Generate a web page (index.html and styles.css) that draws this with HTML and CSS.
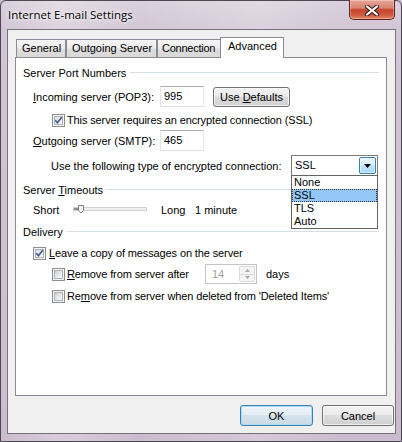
FILE: index.html
```html
<!DOCTYPE html>
<html>
<head>
<meta charset="utf-8">
<title>Internet E-mail Settings</title>
<link rel="stylesheet" href="styles.css">
</head>
<body>
<div class="window">
  <div class="titlebar">
    <span class="title">Internet E-mail Settings</span>
    <div class="close">
      <svg width="14" height="11" viewBox="0 0 14 11">
        <path d="M2 1.5 L12 9.5 M12 1.5 L2 9.5" stroke="#3b2522" stroke-width="4.2" stroke-linecap="round" fill="none"/>
        <path d="M2 1.5 L12 9.5 M12 1.5 L2 9.5" stroke="#ffffff" stroke-width="2.2" stroke-linecap="round" fill="none"/>
      </svg>
    </div>
  </div>
  <div class="client">
    <div class="tabs">
      <div class="tab t-gen">General</div>
      <div class="tab t-out">Outgoing Server</div>
      <div class="tab t-con">Connection</div>
      <div class="tab t-adv active">Advanced</div>
    </div>
    <div class="panel">
      <div class="gh"><span>Server Port Numbers</span></div>

      <div class="row r-in ind1">
        <span class="lbl w-port"><u>I</u>ncoming server (POP3):</span>
        <span class="tb">995</span>
        <button class="btn b-def"><span>Use <u>D</u>efaults</span></button>
      </div>

      <div class="row r-ssl ind2">
        <span class="cb on"><i><svg width="9" height="9" viewBox="0 0 9 9"><path d="M1.2 4.2 L3.4 6.6 L7.8 1.2" stroke="#4a5f97" stroke-width="1.7" fill="none"/></svg></i></span>
        <span class="ct">This server requires an encrypted connection (SSL)</span>
      </div>

      <div class="row r-out ind1">
        <span class="lbl w-port"><u>O</u>utgoing server (SMTP):</span>
        <span class="tb">465</span>
      </div>

      <div class="row r-enc ind-enc">
        <span class="lbl w-enc">Use the following type of encr<u>y</u>pted connection:</span>
        <div class="combo">
          <span class="cv">SSL</span>
          <span class="cbtn"><svg width="7" height="4" viewBox="0 0 7 4"><path d="M0 0 H7 L3.5 4 Z" fill="#000"/></svg></span>
          <div class="list">
            <div class="opt">None</div>
            <div class="opt sel">SSL</div>
            <div class="opt">TLS</div>
            <div class="opt">Auto</div>
          </div>
        </div>
      </div>

      <div class="gh g2"><span>Server <u>T</u>imeouts</span></div>

      <div class="row r-sl ind1">
        <span class="lbl w-short">Short</span>
        <svg class="slider" width="74" height="16" viewBox="0 0 74 16">
          <rect x="0.5" y="5.5" width="73" height="3" fill="#eef0f0" stroke="#d0d2d2"/>
          <rect x="1" y="6" width="5" height="2" fill="#8c8c8c"/>
          <path d="M5.5 3.5 H10.5 V8.5 L8 11 L5.5 8.5 Z" fill="#f3f3f3" stroke="#7d7d7d"/>
        </svg>
        <span class="lbl w-long">Long</span>
        <span class="lbl">1 minute</span>
      </div>

      <div class="gh g3"><span>Delivery</span></div>

      <div class="row r-leave ind1">
        <span class="cb on"><i><svg width="9" height="9" viewBox="0 0 9 9"><path d="M1.2 4.2 L3.4 6.6 L7.8 1.2" stroke="#4a5f97" stroke-width="1.7" fill="none"/></svg></i></span>
        <span class="ct c3"><u>L</u>eave a copy of messages on the server</span>
      </div>

      <div class="row r-after ind2">
        <span class="cb"><i></i></span>
        <span class="ct w-after"><u>R</u>emove from server after</span>
        <div class="spin">
          <span class="sv">14</span>
          <span class="sb">
            <span class="sbu"><svg width="5" height="3" viewBox="0 0 5 3"><path d="M0 3 H5 L2.5 0 Z" fill="#a7a7a7"/></svg></span>
            <span class="sbd"><svg width="5" height="3" viewBox="0 0 5 3"><path d="M0 0 H5 L2.5 3 Z" fill="#a7a7a7"/></svg></span>
          </span>
        </div>
        <span class="lbl days">days</span>
      </div>

      <div class="row r-del ind2">
        <span class="cb"><i></i></span>
        <span class="ct">Re<u>m</u>ove from server when deleted from 'Deleted Items'</span>
      </div>
    </div>
    <div class="buttons">
      <button class="btn b-ok">OK</button>
      <button class="btn b-cancel">Cancel</button>
    </div>
  </div>
</div>
</body>
</html>
```

FILE: styles.css
```css
* { box-sizing: border-box; }
html, body { margin: 0; padding: 0; }
body {
  width: 402px;
  height: 442px;
  overflow: hidden;
  font-family: "Liberation Sans", Arial, sans-serif;
  font-size: 11px;
  color: #000;
  background: #cbbccd;
}
u { text-decoration: underline; text-underline-offset: 1px; }

.window {
  width: 402px;
  height: 442px;
  border: 1px solid #4f4654;
  border-radius: 6px 6px 0 0;
  background:
    linear-gradient(90deg, rgba(255,255,255,0) 0, rgba(255,255,255,.25) 60px, rgba(255,255,255,0) 140px, rgba(255,255,255,.2) 260px, rgba(255,255,255,0) 340px),
    linear-gradient(180deg, #dbd1de 0, #d2c5d5 30px, #cbbbce 100%);
  padding: 0 5px 0 6px;
  display: flex;
  flex-direction: column;
}

.titlebar {
  height: 28px;
  flex: none;
  display: flex;
  justify-content: space-between;
  align-items: flex-start;
  padding-left: 1px;
}
.title {
  font-family: "Open Sans", "Liberation Sans", sans-serif;
  font-size: 11.5px;
  line-height: 16px;
  margin-top: 6px;
  color: #000;
  text-shadow: 0 0 6px rgba(255,255,255,.95), 0 0 3px rgba(255,255,255,.9);
}
.close {
  width: 46px;
  height: 20px;
  margin-top: -1px;
  margin-right: 1px;
  border: 1px solid #5a231c;
  border-top: none;
  border-radius: 0 0 5px 5px;
  background: linear-gradient(180deg, #e7a898 0%, #d9806d 42%, #c5432d 52%, #cf573f 78%, #e4856a 100%);
  box-shadow: inset 0 0 0 1px rgba(255,235,230,.35);
  display: flex;
  align-items: center;
  justify-content: center;
  padding-top: 1px;
}

.client {
  width: 389px;
  height: 405px;
  flex: none;
  border: 1px solid #77717d;
  background: #f0f0f0;
  padding: 7px 0 0 7px;
  display: flex;
  flex-direction: column;
}

.tabs {
  height: 20px;
  flex: none;
  display: flex;
  align-items: flex-end;
  padding-left: 1px;
}
.tab {
  height: 18px;
  border: 1px solid #898c95;
  border-bottom: none;
  background: linear-gradient(180deg, #f5f5f5 0%, #ececec 48%, #dedede 52%, #d9d9d9 100%);
  padding-left: 5px;
  line-height: 17px;
  white-space: nowrap;
  overflow: hidden;
  flex: none;
}
.t-gen { width: 50px; }
.t-out { width: 91px; }
.t-con { width: 65px; padding-left: 4px; letter-spacing: -0.25px; }
.tab.active {
  width: 64px;
  height: 21px;
  margin-left: -2px;
  margin-bottom: -1px;
  background: #fff;
  padding-left: 7px;
  line-height: 17px;
  position: relative;
  z-index: 2;
}

.panel {
  width: 372px;
  height: 339px;
  flex: none;
  border: 1px solid #898c95;
  background: #fff;
  padding: 7px 7px 0 7px;
  display: flex;
  flex-direction: column;
}

.gh {
  height: 16px;
  flex: none;
  display: flex;
  align-items: center;
  white-space: nowrap;
}
.gh::after {
  content: "";
  flex: 1;
  height: 1px;
  background: #d5dfe5;
  margin-left: 4px;
  margin-top: -1px;
}
.g2 { margin-top: 6px; }
.g3 { margin-top: 6px; }

.row {
  display: flex;
  align-items: center;
  flex: none;
  white-space: nowrap;
}
.ind1 { padding-left: 10px; }
.ind2 { padding-left: 29px; }
.ind-enc { padding-left: 28px; }

.r-in { height: 23px; margin-top: 4px; }
.r-ssl { height: 16px; margin-top: 4px; }
.r-out { height: 21px; margin-top: 2px; }
.r-enc { height: 21px; margin-top: 4px; }
.r-sl { height: 16px; margin-top: 4px; }
.r-leave { height: 16px; margin-top: 5px; }
.r-after { height: 20px; margin-top: 3px; }
.r-del { height: 16px; margin-top: 4px; }

.lbl { flex: none; }
.w-port { width: 127px; }
.w-enc { width: 240px; }
.w-short { width: 40px; }
.w-long { width: 34px; margin-left: 14px; }
.w-after { width: 138px; }
.days { margin-left: 9px; }

.tb {
  width: 44px;
  height: 21px;
  flex: none;
  border: 1px solid #dbdfe6;
  border-top-color: #abadb3;
  border-left-color: #e2e3ea;
  border-right-color: #e3e9ef;
  background: #fff;
  padding-left: 3px;
  line-height: 19px;
}

.cb {
  width: 13px;
  height: 13px;
  flex: none;
  border: 1px solid #8e8f8f;
  background: #f4f4f4;
  padding: 1px;
}
.cb i {
  display: block;
  width: 9px;
  height: 9px;
  border: 1px solid #aeb3b9;
  background: linear-gradient(135deg, #cbcfd5 0%, #e6e8eb 50%, #f7f7f7 100%);
}
.cb i svg { display: block; margin: -1px 0 0 -1px; overflow: visible; }
.cb.on i { background: linear-gradient(135deg, #dadde2 0%, #eceef0 50%, #f8f8f8 100%); }
.ct { margin-left: 2px; letter-spacing: -0.12px; }
.ct.c3 { margin-left: 3px; }

.btn {
  font-family: "Liberation Sans", Arial, sans-serif;
  font-size: 11px;
  color: #000;
  height: 21px;
  border: 1px solid #707070;
  border-radius: 3px;
  background: linear-gradient(180deg, #f2f2f2 0%, #ebebeb 45%, #dddddd 50%, #cfcfcf 100%);
  box-shadow: inset 0 0 0 1px rgba(255,255,255,.7);
  padding: 0;
  text-align: center;
  flex: none;
}
.b-def { width: 77px; height: 20px; margin-left: 9px; }

.combo {
  width: 87px;
  height: 21px;
  flex: none;
  position: relative;
  border: 1px solid #7b7b7b;
  background: #fff;
  display: flex;
  align-items: center;
  justify-content: space-between;
  padding: 0 1px 0 3px;
}
.cv { line-height: 17px; }
.cbtn {
  width: 17px;
  height: 17px;
  border: 1px solid #3c7fb1;
  border-radius: 2px;
  background: linear-gradient(180deg, #eaf6fd 0%, #d9f0fc 45%, #bee6fd 50%, #a7d9f5 100%);
  box-shadow: inset 0 0 0 1px rgba(255,255,255,.5);
  display: flex;
  align-items: center;
  justify-content: center;
}
.cbtn svg { display: block; }
.list {
  position: absolute;
  left: -1px;
  top: 19px;
  width: 87px;
  border: 1px solid #646464;
  background: #fff;
  z-index: 5;
}
.opt {
  height: 13px;
  line-height: 13px;
  padding-left: 2px;
}
.opt.sel {
  background: #93c7f7;
  outline: 1px dotted #333;
  outline-offset: -1px;
}

.slider { display: block; flex: none; }

.spin {
  width: 52px;
  height: 20px;
  flex: none;
  border: 1px solid #c2c4c7;
  background: #fff;
  display: flex;
  justify-content: space-between;
  padding: 1px;
}
.sv { color: #a0a0a0; padding-left: 5px; line-height: 16px; }
.sb {
  width: 16px;
  display: flex;
  flex-direction: column;
}
.sbu, .sbd {
  flex: 1;
  border: 1px solid #dadada;
  background: #f4f4f4;
  display: flex;
  align-items: center;
  justify-content: center;
}
.sbu { border-bottom-width: 0; border-radius: 2px 2px 0 0; }
.sbd { border-radius: 0 0 2px 2px; }
.sbu svg, .sbd svg { display: block; }

.buttons {
  flex: none;
  display: flex;
  justify-content: flex-end;
  gap: 9px;
  margin-top: 9px;
  width: 379px;
}
.b-ok {
  width: 73px;
  border-color: #3c7fb1;
  background: linear-gradient(180deg, #eef5f9 0%, #e4eef4 45%, #d5e3ec 50%, #cbdbe6 100%);
  box-shadow: inset 0 0 0 1px #a9dcf6;
}
.b-cancel { width: 72px; }
```
